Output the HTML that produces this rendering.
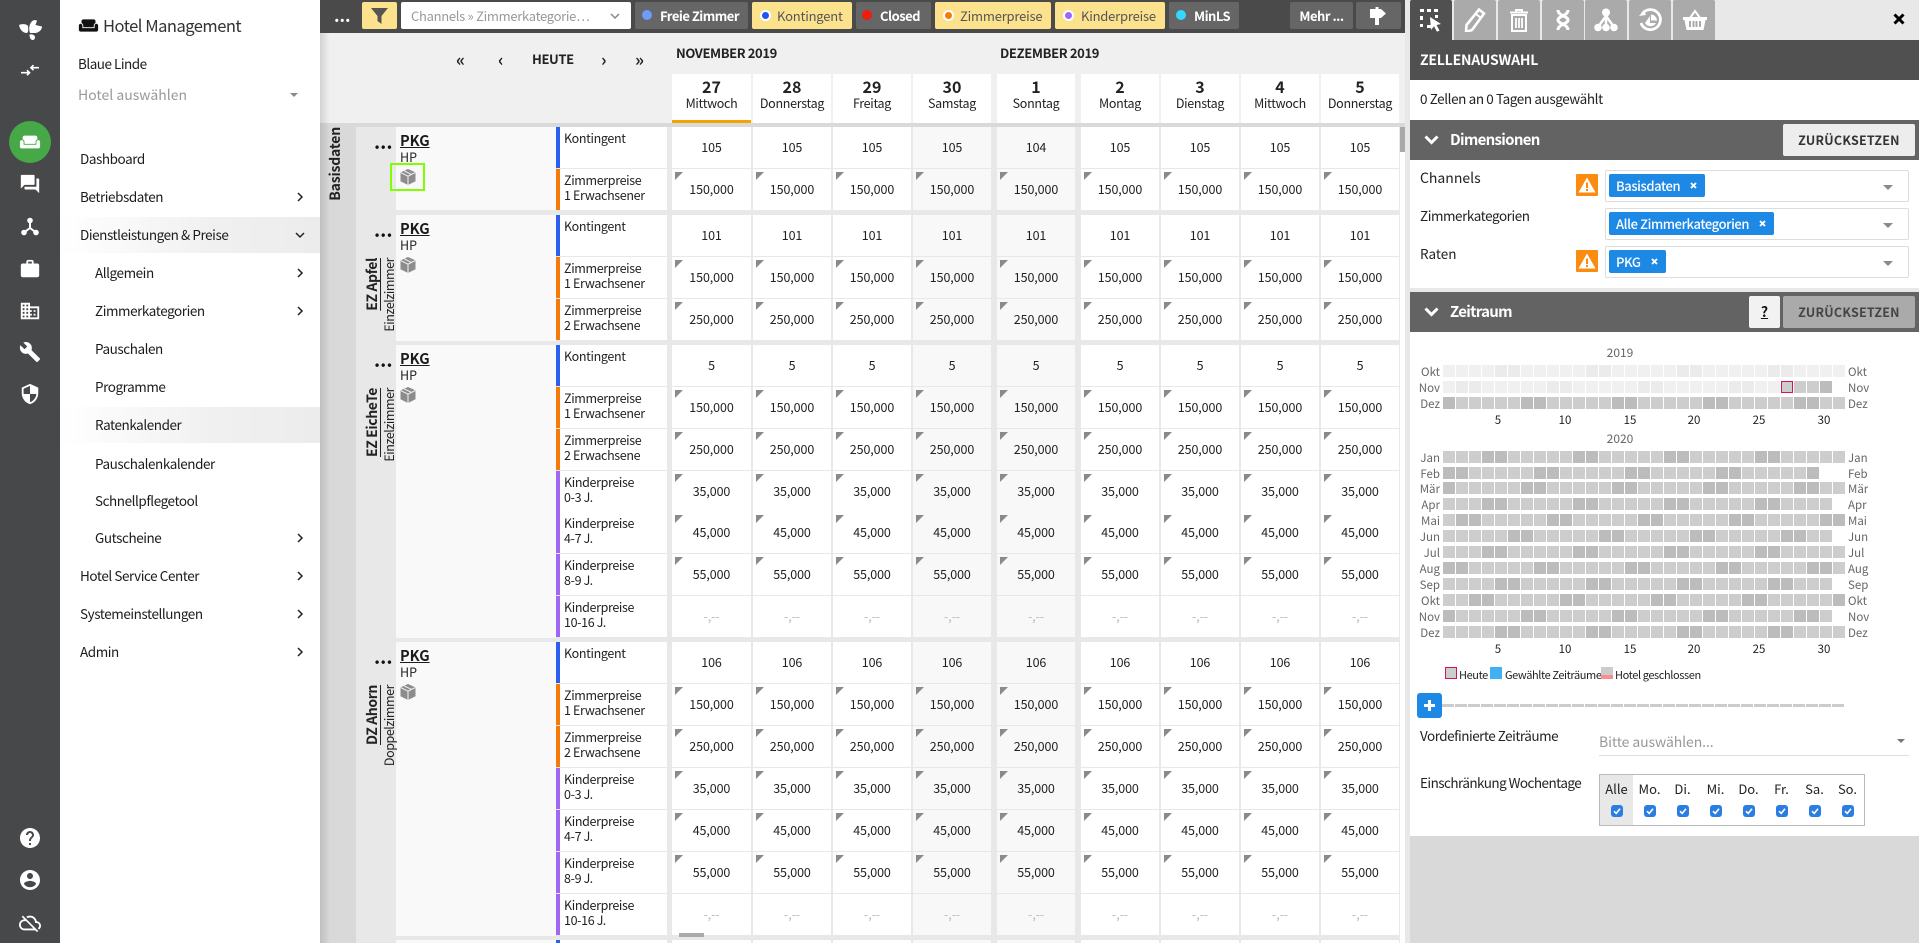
<!DOCTYPE html>
<html lang="de"><head><meta charset="utf-8"><title>Ratenkalender</title>
<style>
*{box-sizing:border-box;margin:0;padding:0}
html,body{width:1919px;height:943px;overflow:hidden;background:#fff}
body{position:relative;font-family:"Noto Sans CJK JP","Liberation Sans",sans-serif;font-size:13px;color:#222;line-height:16px}
.a{position:absolute}
.a,.m,.t1,.tb,.lb,.k,.c,.ml,.mr,.n,.wd,.wc{white-space:nowrap}
#rail{position:absolute;left:0;top:0;width:60px;height:943px;background:#47484a}
#rail svg{position:absolute;fill:#fff}
#side{position:absolute;left:60px;top:0;width:260px;height:943px;background:#fff}
.m{position:absolute;left:0;width:260px;height:36px;line-height:34px;font-size:13.5px;letter-spacing:-.44px;padding-left:20px;color:#1c1c1c}
.m.s{padding-left:35px}
.m.h{background:linear-gradient(90deg,#fff,#f0f0f0 60%,#ececec)}
.m svg{position:absolute;left:235px;top:13px}
#main{position:absolute;left:320px;top:33px;width:1085px;height:910px;background:#f0f0f0}
#shade{position:absolute;left:320px;top:33px;width:10px;height:910px;background:linear-gradient(90deg,rgba(0,0,0,.12),rgba(0,0,0,0))}
#top{position:absolute;left:320px;top:0;width:1085px;height:33px;background:#4a4a4a}
.tb{position:absolute;top:2px;height:27px;border-radius:2px;background:#666;color:#fff;font-weight:700;line-height:27px;font-size:13px;letter-spacing:-.5px}
.tb.y{background:#fde28e;color:#555;font-weight:400;letter-spacing:-.2px}
.tb b{position:absolute;top:8px;width:10px;height:10px;border-radius:50%}
.tb.y b{box-shadow:0 0 0 2px #fff;width:7px;height:7px;top:10px;left:9.500px}
.tb span{position:absolute;top:0}
.hd{position:absolute;top:74px;height:49px;background:#fff;text-align:center}
.hd b{display:block;font-size:16px;line-height:18px;margin-top:3px}
.hd span{display:block;font-size:12.500px;letter-spacing:-.3px;line-height:17px;margin-top:-1px}
.lft{position:absolute;background:#f9f9f9;left:396px;width:160px}
.r{position:absolute;left:556px;width:844px;height:41px}
.r u{position:absolute;left:0;top:0;width:4px;height:100%;text-decoration:none}
.k u{background:#2b5ff0}
.z u{background:#f57a0a}
.p u{background:#a067f5}
.r p{position:absolute;left:4px;top:0;width:107px;height:100%;background:#fff;padding:3px 0 0 4px;font-size:12.500px;letter-spacing:-.35px;line-height:15px}
.r i{position:absolute;top:0;height:100%;width:78px;background:#fff;text-align:center;line-height:39px;font-style:normal;font-size:12.500px;letter-spacing:-.1px}
.r i:nth-of-type(1){left:116px;width:79px}
.r i:nth-of-type(2){left:197px}
.r i:nth-of-type(3){left:277px}
.r i:nth-of-type(4){left:357px;background:#f8f8f8}
.r i:nth-of-type(5){left:441px;background:#f8f8f8}
.r i:nth-of-type(6){left:525px}
.r i:nth-of-type(7){left:605px}
.r i:nth-of-type(8){left:685px}
.r i:nth-of-type(9){left:765px}
.t i::before{content:"";position:absolute;left:3px;top:3px;width:0;height:0;border-top:8px solid #8a8a8a;border-right:8px solid transparent}
.e i{color:#bbb}
.pk{position:absolute;left:400px;font-size:14.500px;line-height:18px;font-weight:700;text-decoration:underline;color:#1c1c1c}
.hp{position:absolute;left:400px;font-size:12.500px;line-height:16px}
.dots{position:absolute;left:374px;font-size:19px;font-weight:700;line-height:10px;letter-spacing:0;color:#111}
.box{position:absolute;left:400px;width:16px;height:16px}
.vt{position:absolute;writing-mode:vertical-rl;transform:rotate(180deg);white-space:nowrap}
.vn{left:364px;width:16px;line-height:16px;font-size:14px;letter-spacing:-.4px;font-weight:700;text-decoration:underline;color:#222}
.vs{left:381px;width:16px;line-height:16px;font-size:12.500px;letter-spacing:-.45px;color:#222}
#pan{position:absolute;left:1410px;top:0;width:509px;height:943px;background:#d9d9d9}
#strip{position:absolute;left:1405px;top:0;width:5px;height:943px;background:#e8e8e8}
.tab{position:absolute;top:0;width:42px;height:40px;background:#aaa;border-radius:2px 2px 0 0}
.tab svg{position:absolute;left:9px;top:8px}
.sec{position:absolute;left:1410px;width:509px;height:40px;background:#636363;color:#fff;font-weight:700;font-size:15px;letter-spacing:-.7px;line-height:40px}
.btn{position:absolute;top:124px;left:1783px;width:132px;height:32px;background:#ededed;border-radius:2px;color:#333;font-weight:700;font-size:12.500px;letter-spacing:.25px;line-height:32px;text-align:center}
.sel{position:absolute;left:1605px;width:304px;height:32px;background:#fff;border:1px solid #ddd;border-radius:2px}
.tag{position:absolute;left:3px;top:3px;height:23px;background:#1e88e5;border-radius:2px;color:#fff;font-size:13px;letter-spacing:-.4px;font-weight:500;line-height:23px;padding-left:7px}
.tag svg{position:absolute;top:8px}
.car{position:absolute;width:0;height:0;border-left:5px solid transparent;border-right:5px solid transparent;border-top:5px solid #8a8a8a}
.lb{position:absolute;left:1420px;font-size:13.500px;line-height:18px}
.c{position:absolute;left:1443px;height:12px;--d:#bcbcbc;--l:#cdcdcd;background-image:linear-gradient(90deg,var(--d) 0 12px,#fff 12px 13px,var(--d) 13px 25px,#fff 25px 26px,var(--l) 26px 38px,#fff 38px 39px,var(--l) 39px 51px,#fff 51px 52px,var(--l) 52px 64px,#fff 64px 65px,var(--l) 65px 77px,#fff 77px 78px,var(--l) 78px 90px,#fff 90px 91px);background-size:91px 12px}
.c.lt{--d:#ebebeb;--l:#f0f0f0}
.ml,.mr{position:absolute;font-size:11.500px;line-height:14px;color:#666;margin-top:1px}
.ml{left:1400px;width:40px;text-align:right}
.mr{left:1848px}
.n{position:absolute;font-size:11.500px;line-height:14px;width:30px;text-align:center;color:#222}
.yr{position:absolute;left:1590px;width:60px;text-align:center;color:#666;font-size:12px;line-height:14px}
.cl{position:absolute;width:12px;height:12px}
.lg{position:absolute;top:668px;font-size:11px;letter-spacing:-.4px;line-height:14px}
.wd{position:absolute;top:781px;width:33px;text-align:center;font-size:13px;line-height:16px}
.wc{position:absolute;top:805px;width:12px;height:12px;border-radius:3px;background:#2a7de1}
.wc svg{position:absolute;left:0;top:0}
.dash{position:absolute;left:1442px;top:704px;width:402px;height:3px;background:repeating-linear-gradient(90deg,#ccc 0 12px,#fff 12px 13px)}
</style></head><body>
<svg width="0" height="0" style="position:absolute"><defs>
<symbol id="chr" viewBox="0 0 10 10"><path d="M3 1l4 4-4 4" fill="none" stroke="#222" stroke-width="1.5"/></symbol>
<symbol id="bx" viewBox="0 0 16 16"><path d="M8 0L15.500 3.400V12.200L8 16L.5 12.200V3.400z" fill="#8c8c8c"/><path d="M.8 3.600L8 7.200L15.200 3.600M8 7.200V16M4.200 1.900L11.600 5.400" fill="none" stroke="#f4f4f4" stroke-width="1"/></symbol>
<symbol id="warn" viewBox="0 0 22 22"><rect width="22" height="22" rx="1" fill="#fb8c0f"/><path d="M11 3.500L19.500 18.500H2.500z" fill="#fff"/><rect x="10" y="8.500" width="2" height="5.500" fill="#fb8c0f"/><rect x="10" y="15" width="2" height="2" fill="#fb8c0f"/></symbol>
<symbol id="ck" viewBox="0 0 12 12"><path d="M3 6.200L5.200 8.400L9 3.800" fill="none" stroke="#fff" stroke-width="1.6"/></symbol>
<symbol id="xx" viewBox="0 0 7 7"><path d="M1 1l5 5M6 1L1 6" stroke="#fff" stroke-width="1.900"/></symbol>
</defs></svg>

<div id="rail">
<svg style="left:19px;top:20px" width="24" height="21" viewBox="0 0 24 21"><path d="M0 5C3 3.500 8 4 9 6C9.500 9 9.500 12 8 13C4 13 1 10 0 5ZM11 13C9.500 9 10 3 14 .5C15.500 0 17 0 18 .5L16.500 5L23 6.500C23 9 21 12 17 13ZM10.500 14.500C13 14 16 15 16 17C16 19 15 20 13.500 20C12 20 10.500 18 10.500 14.500Z"/></svg>
<svg style="left:20px;top:63px" width="20" height="14" viewBox="0 0 20 14"><path d="M19 4.700H11M13.500 2.200L11 4.700L13.500 7.200M1 9.700H9.500M7 7.200L9.500 9.700L7 12.200" fill="none" stroke="#fff" stroke-width="1.700"/></svg>
<div class="a" style="left:9px;top:121px;width:42px;height:42px;border-radius:50%;background:#46a846"></div>
<svg style="left:19px;top:131px" width="22" height="22" viewBox="0 0 24 24"><path d="M21 10c-1.100 0-2 .9-2 2v3H5v-3c0-1.100-.9-2-2-2s-2 .9-2 2v5c0 1.100.9 2 2 2h18c1.100 0 2-.9 2-2v-5c0-1.100-.9-2-2-2zm-3-5H6c-1.100 0-2 .9-2 2v2.150c1.160.41 2 1.510 2 2.820V14h12v-2.030c0-1.300.84-2.400 2-2.820V7c0-1.100-.9-2-2-2z"/></svg>
<svg style="left:19px;top:173px" width="22" height="22" viewBox="0 0 24 24"><path d="M21 6h-2v9H6v2c0 .55.45 1 1 1h11l4 4V7c0-.55-.45-1-1-1zm-4 6V3c0-.55-.45-1-1-1H3c-.55 0-1 .45-1 1v14l4-4h10c.55 0 1-.45 1-1z"/></svg>
<svg style="left:21px;top:217px" width="18" height="19" viewBox="0 0 18 19"><circle cx="9" cy="3.500" r="2.800"/><circle cx="3" cy="15.500" r="2.800"/><circle cx="15" cy="15.500" r="2.800"/><path d="M9 6v5L3 15.500M9 11l6 4.500" fill="none" stroke="#fff" stroke-width="2"/></svg>
<svg style="left:19px;top:258px" width="22" height="22" viewBox="0 0 24 24"><path d="M20 6h-4V4c0-1.110-.89-2-2-2h-4c-1.110 0-2 .89-2 2v2H4c-1.110 0-1.990.89-1.990 2L2 19c0 1.110.89 2 2 2h16c1.110 0 2-.89 2-2V8c0-1.110-.89-2-2-2zm-6 0h-4V4h4v2z"/></svg>
<svg style="left:19px;top:300px" width="22" height="22" viewBox="0 0 24 24"><path d="M12 7V3H2v18h20V7H12zM6 19H4v-2h2v2zm0-4H4v-2h2v2zm0-4H4V9h2v2zm0-4H4V5h2v2zm4 12H8v-2h2v2zm0-4H8v-2h2v2zm0-4H8V9h2v2zm0-4H8V5h2v2zm10 12h-8v-2h2v-2h-2v-2h2v-2h-2V9h8v10zm-2-8h-2v2h2v-2zm0 4h-2v2h2v-2z"/></svg>
<svg style="left:19px;top:341px" width="22" height="22" viewBox="0 0 24 24"><path d="M22.700 19l-9.100-9.100c.9-2.300.4-5-1.500-6.900-2-2-5-2.400-7.400-1.300L9 6 6 9 1.600 4.700C.4 7.100.9 10.100 2.900 12.100c1.900 1.900 4.600 2.400 6.900 1.500l9.100 9.100c.4.4 1 .4 1.400 0l2.300-2.300c.5-.4.5-1.100.1-1.400z"/></svg>
<svg style="left:19px;top:383px" width="22" height="22" viewBox="0 0 24 24"><path d="M12 1L3 5v6c0 5.550 3.840 10.740 9 12 5.160-1.260 9-6.450 9-12V5l-9-4zm0 10.990h7c-.53 4.120-3.280 7.790-7 8.940V12H5V6.300l7-3.110v8.800z"/></svg>
<svg style="left:18px;top:826px" width="24" height="24" viewBox="0 0 24 24"><path d="M12 2C6.480 2 2 6.480 2 12s4.480 10 10 10 10-4.480 10-10S17.520 2 12 2zm1 17h-2v-2h2v2zm2.070-7.750l-.9.92C13.450 12.900 13 13.500 13 15h-2v-.5c0-1.100.45-2.100 1.170-2.830l1.240-1.260c.37-.36.59-.86.59-1.410 0-1.100-.9-2-2-2s-2 .9-2 2H8c0-2.210 1.790-4 4-4s4 1.790 4 4c0 .88-.36 1.680-.93 2.250z"/></svg>
<svg style="left:18px;top:868px" width="24" height="24" viewBox="0 0 24 24"><path d="M12 2C6.480 2 2 6.480 2 12s4.480 10 10 10 10-4.480 10-10S17.520 2 12 2zm0 3c1.660 0 3 1.340 3 3s-1.340 3-3 3-3-1.340-3-3 1.340-3 3-3zm0 14.200c-2.500 0-4.710-1.280-6-3.220.03-1.990 4-3.080 6-3.080 1.990 0 5.970 1.090 6 3.080-1.290 1.940-3.500 3.220-6 3.220z"/></svg>
<svg style="left:19px;top:912px" width="22" height="22" viewBox="0 0 24 24"><path d="M19.350 10.040C18.670 6.590 15.640 4 12 4c-1.480 0-2.850.43-4.010 1.170l1.460 1.460C10.210 6.230 11.080 6 12 6c3.040 0 5.500 2.460 5.500 5.500v.5H19c1.660 0 3 1.340 3 3 0 1.130-.64 2.110-1.560 2.620l1.450 1.450C23.160 18.160 24 16.680 24 15c0-2.640-2.050-4.780-4.650-4.960zM3 5.270l2.750 2.740C2.560 8.150 0 10.770 0 14c0 3.310 2.690 6 6 6h11.730l2 2L21 20.730 4.270 4 3 5.270zM7.730 10l8 8H6c-2.210 0-4-1.790-4-4s1.790-4 4-4h1.730z"/></svg>
</div>

<div id="side">
<svg class="a" style="left:18px;top:15px" width="21" height="21" viewBox="0 0 24 24"><path fill="#111" d="M21 10c-1.100 0-2 .9-2 2v3H5v-3c0-1.100-.9-2-2-2s-2 .9-2 2v5c0 1.100.9 2 2 2h18c1.100 0 2-.9 2-2v-5c0-1.100-.9-2-2-2zm-3-5H6c-1.100 0-2 .9-2 2v2.150c1.160.41 2 1.510 2 2.820V14h12v-2.030c0-1.300.84-2.400 2-2.820V7c0-1.100-.9-2-2-2z"/></svg>
<div class="a" style="left:43px;top:14px;font-size:16.500px;letter-spacing:-.5px;line-height:22px;color:#333">Hotel Management</div>
<div class="a" style="left:18px;top:54px;font-size:13.500px;letter-spacing:-.5px;line-height:18px;color:#1c1c1c">Blaue Linde</div>
<div class="a" style="left:18px;top:86px;font-size:14px;line-height:18px;color:#999">Hotel auswählen</div>
<div class="car" style="left:230px;top:93px;border-left-width:4px;border-right-width:4px;border-top-width:4px"></div>
<div class="m" style="top:141px">Dashboard</div>
<div class="m" style="top:179px">Betriebsdaten<svg width="10" height="10"><use href="#chr"/></svg></div>
<div class="m h" style="top:217px">Dienstleistungen &amp; Preise<svg width="10" height="10" style="transform:rotate(90deg)"><use href="#chr"/></svg></div>
<div class="m s" style="top:255px">Allgemein<svg width="10" height="10"><use href="#chr"/></svg></div>
<div class="m s" style="top:293px">Zimmerkategorien<svg width="10" height="10"><use href="#chr"/></svg></div>
<div class="m s" style="top:331px">Pauschalen</div>
<div class="m s" style="top:369px">Programme</div>
<div class="m s h" style="top:407px">Ratenkalender</div>
<div class="m s" style="top:446px">Pauschalenkalender</div>
<div class="m s" style="top:483px">Schnellpflegetool</div>
<div class="m s" style="top:520px">Gutscheine<svg width="10" height="10"><use href="#chr"/></svg></div>
<div class="m" style="top:558px">Hotel Service Center<svg width="10" height="10"><use href="#chr"/></svg></div>
<div class="m" style="top:596px">Systemeinstellungen<svg width="10" height="10"><use href="#chr"/></svg></div>
<div class="m" style="top:634px">Admin<svg width="10" height="10"><use href="#chr"/></svg></div>
</div>

<div id="main"></div>
<div id="top">
<div class="a" style="left:14px;top:8px;color:#fff;font-weight:700;font-size:17px;line-height:14px">...</div>
<div class="tb y" style="left:42px;width:35px"><svg class="a" style="left:9px;top:6px" width="17" height="16" viewBox="0 0 17 16"><path d="M0 0H17L10.500 8V16L6.500 13V8z" fill="#555"/></svg></div>
<div class="tb" style="left:81px;width:230px;background:#fff;color:#999;font-weight:400;letter-spacing:-.3px"><span style="left:10px">Channels » Zimmerkategorie…</span><svg class="a" style="left:209px;top:9px" width="10" height="10"><path d="M1 3l4 4 4-4" fill="none" stroke="#888" stroke-width="1.500"/></svg></div>
<div class="tb" style="left:315px;width:113px"><b style="left:7px;background:#6e9bff"></b><span style="left:25px">Freie Zimmer</span></div>
<div class="tb y" style="left:432px;width:100px"><b style="background:#1f55f0"></b><span style="left:25px">Kontingent</span></div>
<div class="tb" style="left:536px;width:75px"><b style="left:6px;background:#f01c0c"></b><span style="left:24px">Closed</span></div>
<div class="tb y" style="left:615px;width:116px"><b style="background:#f57a0a"></b><span style="left:25px">Zimmerpreise</span></div>
<div class="tb y" style="left:735px;width:110px"><b style="background:#a067f5"></b><span style="left:26px">Kinderpreise</span></div>
<div class="tb" style="left:849px;width:70px"><b style="left:7px;background:#33d7ff"></b><span style="left:25px">MinLS</span></div>
<div class="tb" style="left:970px;width:63px;text-align:center">Mehr ...</div>
<div class="tb" style="left:1036px;width:45px"><svg class="a" style="left:13px;top:5px" width="18" height="19" viewBox="0 0 18 19"><path d="M1 2H12L17 6.500L12 11H1zM6 11h4v7H6zM6.500 0h3v2h-3z" fill="#fff"/></svg></div>
</div>

<div class="a" style="left:456px;top:50px;font-weight:700;font-size:17px;line-height:18px">«</div>
<div class="a" style="left:498px;top:50px;font-weight:700;font-size:17px;line-height:18px">‹</div>
<div class="a" style="left:532px;top:50px;font-weight:700;font-size:13px;letter-spacing:-.4px;line-height:18px">HEUTE</div>
<div class="a" style="left:601px;top:50px;font-weight:700;font-size:17px;line-height:18px">›</div>
<div class="a" style="left:635px;top:50px;font-weight:700;font-size:17px;line-height:18px">»</div>
<div class="a" style="left:676px;top:44px;font-weight:700;font-size:13px;letter-spacing:-.4px;line-height:18px">NOVEMBER 2019</div>
<div class="a" style="left:1000px;top:44px;font-weight:700;font-size:13px;letter-spacing:-.35px;line-height:18px">DEZEMBER 2019</div>

<div class="hd" style="left:672px;width:79px;border-bottom:3px solid #f5a300"><b>27</b><span>Mittwoch</span></div>
<div class="hd" style="left:753px;width:78px"><b>28</b><span>Donnerstag</span></div>
<div class="hd" style="left:833px;width:78px"><b>29</b><span>Freitag</span></div>
<div class="hd" style="left:913px;width:78px"><b>30</b><span>Samstag</span></div>
<div class="hd" style="left:997px;width:78px"><b>1</b><span>Sonntag</span></div>
<div class="hd" style="left:1081px;width:78px"><b>2</b><span>Montag</span></div>
<div class="hd" style="left:1161px;width:78px"><b>3</b><span>Dienstag</span></div>
<div class="hd" style="left:1241px;width:78px"><b>4</b><span>Mittwoch</span></div>
<div class="hd" style="left:1321px;width:78px"><b>5</b><span>Donnerstag</span></div>

<div class="a" style="left:320px;top:123px;width:1085px;height:820px;background:#e8e8e8"></div>
<div class="a" style="left:320px;top:123px;width:1085px;height:4px;background:#d9d9d9"></div>
<div class="a" style="left:320px;top:123px;width:36px;height:820px;background:#d9d9d9"></div>
<div class="a" style="left:1400px;top:127px;width:5px;height:816px;background:#fff"></div>
<div class="a" style="left:1400px;top:127px;width:5px;height:25px;background:#aaa"></div>
<div id="shade"></div>
<div class="vt" style="left:327px;top:127px;width:16px;line-height:16px;font-size:14px;letter-spacing:-.2px;font-weight:700;color:#222">Basisdaten</div>

<div class="lft" style="top:127px;height:83px"></div>
<div class="lft" style="top:215px;height:126px"></div>
<div class="lft" style="top:345px;height:293px"></div>
<div class="lft" style="top:642px;height:294px"></div>
<div class="lft" style="top:940px;height:3px"></div>

<div class="dots" style="top:137px">...</div>
<div class="pk" style="top:132px">PKG</div><div class="hp" style="top:149px">HP</div>
<div class="a" style="left:390px;top:163px;width:35px;height:28px;border:2px solid #80ff00"></div>
<svg class="box" style="top:169px"><use href="#bx"/></svg>

<div class="dots" style="top:225px">...</div>
<div class="pk" style="top:220px">PKG</div><div class="hp" style="top:237px">HP</div>
<svg class="box" style="top:257px"><use href="#bx"/></svg>
<div class="vt vn" style="top:258px">EZ Apfel</div><div class="vt vs" style="top:258px">Einzelzimmer</div>

<div class="dots" style="top:355px">...</div>
<div class="pk" style="top:350px">PKG</div><div class="hp" style="top:367px">HP</div>
<svg class="box" style="top:387px"><use href="#bx"/></svg>
<div class="vt vn" style="top:388px">EZ EicheTe</div><div class="vt vs" style="top:388px">Einzelzimmer</div>

<div class="dots" style="top:652px">...</div>
<div class="pk" style="top:647px">PKG</div><div class="hp" style="top:664px">HP</div>
<svg class="box" style="top:684px"><use href="#bx"/></svg>
<div class="vt vn" style="top:685px">DZ Ahorn</div><div class="vt vs" style="top:685px">Doppelzimmer</div>

<div class="r k" style="top:127px"><u></u><p>Kontingent</p><i>105</i><i>105</i><i>105</i><i>105</i><i>104</i><i>105</i><i>105</i><i>105</i><i>105</i></div>
<div class="r z t" style="top:169px"><u></u><p>Zimmerpreise<br>1 Erwachsener</p><i>150,000</i><i>150,000</i><i>150,000</i><i>150,000</i><i>150,000</i><i>150,000</i><i>150,000</i><i>150,000</i><i>150,000</i></div>

<div class="r k" style="top:215px"><u></u><p>Kontingent</p><i>101</i><i>101</i><i>101</i><i>101</i><i>101</i><i>101</i><i>101</i><i>101</i><i>101</i></div>
<div class="r z t" style="top:257px"><u></u><p>Zimmerpreise<br>1 Erwachsener</p><i>150,000</i><i>150,000</i><i>150,000</i><i>150,000</i><i>150,000</i><i>150,000</i><i>150,000</i><i>150,000</i><i>150,000</i></div>
<div class="r z t" style="top:299px"><u></u><p>Zimmerpreise<br>2 Erwachsene</p><i>250,000</i><i>250,000</i><i>250,000</i><i>250,000</i><i>250,000</i><i>250,000</i><i>250,000</i><i>250,000</i><i>250,000</i></div>

<div class="r k" style="top:345px"><u></u><p>Kontingent</p><i>5</i><i>5</i><i>5</i><i>5</i><i>5</i><i>5</i><i>5</i><i>5</i><i>5</i></div>
<div class="r z t" style="top:387px"><u></u><p>Zimmerpreise<br>1 Erwachsener</p><i>150,000</i><i>150,000</i><i>150,000</i><i>150,000</i><i>150,000</i><i>150,000</i><i>150,000</i><i>150,000</i><i>150,000</i></div>
<div class="r z t" style="top:429px"><u></u><p>Zimmerpreise<br>2 Erwachsene</p><i>250,000</i><i>250,000</i><i>250,000</i><i>250,000</i><i>250,000</i><i>250,000</i><i>250,000</i><i>250,000</i><i>250,000</i></div>
<div class="r p t" style="top:471px"><u></u><p>Kinderpreise<br>0-3 J.</p><i>35,000</i><i>35,000</i><i>35,000</i><i>35,000</i><i>35,000</i><i>35,000</i><i>35,000</i><i>35,000</i><i>35,000</i></div>
<div class="r p t" style="top:512px"><u></u><p>Kinderpreise<br>4-7 J.</p><i>45,000</i><i>45,000</i><i>45,000</i><i>45,000</i><i>45,000</i><i>45,000</i><i>45,000</i><i>45,000</i><i>45,000</i></div>
<div class="r p t" style="top:554px"><u></u><p>Kinderpreise<br>8-9 J.</p><i>55,000</i><i>55,000</i><i>55,000</i><i>55,000</i><i>55,000</i><i>55,000</i><i>55,000</i><i>55,000</i><i>55,000</i></div>
<div class="r p e" style="top:596px"><u></u><p>Kinderpreise<br>10-16 J.</p><i>-,--</i><i>-,--</i><i>-,--</i><i>-,--</i><i>-,--</i><i>-,--</i><i>-,--</i><i>-,--</i><i>-,--</i></div>

<div class="r k" style="top:642px"><u></u><p>Kontingent</p><i>106</i><i>106</i><i>106</i><i>106</i><i>106</i><i>106</i><i>106</i><i>106</i><i>106</i></div>
<div class="r z t" style="top:684px"><u></u><p>Zimmerpreise<br>1 Erwachsener</p><i>150,000</i><i>150,000</i><i>150,000</i><i>150,000</i><i>150,000</i><i>150,000</i><i>150,000</i><i>150,000</i><i>150,000</i></div>
<div class="r z t" style="top:726px"><u></u><p>Zimmerpreise<br>2 Erwachsene</p><i>250,000</i><i>250,000</i><i>250,000</i><i>250,000</i><i>250,000</i><i>250,000</i><i>250,000</i><i>250,000</i><i>250,000</i></div>
<div class="r p t" style="top:768px"><u></u><p>Kinderpreise<br>0-3 J.</p><i>35,000</i><i>35,000</i><i>35,000</i><i>35,000</i><i>35,000</i><i>35,000</i><i>35,000</i><i>35,000</i><i>35,000</i></div>
<div class="r p t" style="top:810px"><u></u><p>Kinderpreise<br>4-7 J.</p><i>45,000</i><i>45,000</i><i>45,000</i><i>45,000</i><i>45,000</i><i>45,000</i><i>45,000</i><i>45,000</i><i>45,000</i></div>
<div class="r p t" style="top:852px"><u></u><p>Kinderpreise<br>8-9 J.</p><i>55,000</i><i>55,000</i><i>55,000</i><i>55,000</i><i>55,000</i><i>55,000</i><i>55,000</i><i>55,000</i><i>55,000</i></div>
<div class="r p e" style="top:894px"><u></u><p>Kinderpreise<br>10-16 J.</p><i>-,--</i><i>-,--</i><i>-,--</i><i>-,--</i><i>-,--</i><i>-,--</i><i>-,--</i><i>-,--</i><i>-,--</i></div>
<div class="r k" style="top:940px;height:3px"><u></u><p></p><i></i><i></i><i></i><i></i><i></i><i></i><i></i><i></i><i></i></div>
<div class="a" style="left:679px;top:933px;width:25px;height:4px;background:#aaa"></div>

<div id="strip"></div>
<div id="pan"></div>
<div class="a" style="left:1410px;top:0;width:509px;height:40px;background:#e8e8e8"></div>
<div class="tab" style="left:1410px;background:#505050"><svg width="24" height="24" viewBox="0 0 24 24"><path d="M1 1h4v3H1zM8 1h4v3H8zM15 1h4v3h-4zM1 8h3v4H1zM16 7h3v3h-3zM1 16h3v3H1zM8 17h4v3H8z" fill="#fff"/><path d="M11 9l11 7-4.500 1 3 5.500-2.500 1.300-3-5.500L12 22z" fill="#fff"/></svg></div>
<div class="tab" style="left:1454px"><svg width="24" height="24" viewBox="0 0 24 24"><path d="M16 1.500l5 4L9 22l-6 2 .5-7z" fill="none" stroke="#fff" stroke-width="2.600"/><path d="M13 6l5 4" stroke="#fff" stroke-width="2"/></svg></div>
<div class="tab" style="left:1498px"><svg width="24" height="24" viewBox="0 0 24 24"><path d="M3 4.500h18M9 4V2h6v2" fill="none" stroke="#fff" stroke-width="2"/><path d="M5 7h14v16H5z" fill="none" stroke="#fff" stroke-width="2"/><path d="M9 10v10M12 10v10M15 10v10" stroke="#fff" stroke-width="1.800"/></svg></div>
<div class="tab" style="left:1542px"><svg width="24" height="24" viewBox="0 0 24 24"><path d="M7 2C7 8 17 8 17 12C17 16 7 16 7 22M17 2C17 8 7 8 7 12C7 16 17 16 17 22" fill="none" stroke="#fff" stroke-width="3"/></svg></div>
<div class="tab" style="left:1585px"><svg width="24" height="24" viewBox="0 0 24 24"><path d="M12 5v14M12 8L4 19M12 8l8 11" fill="none" stroke="#fff" stroke-width="2.500"/><g fill="#fff"><circle cx="12" cy="4.500" r="4"/><circle cx="4" cy="19.500" r="3.800"/><circle cx="20" cy="19.500" r="3.800"/><circle cx="12" cy="19.500" r="3.800"/></g></svg></div>
<div class="tab" style="left:1629px"><svg width="24" height="24" viewBox="0 0 24 24"><path d="M4.500 5.500A10 10 0 1 1 3 15" fill="none" stroke="#fff" stroke-width="2.800"/><path d="M1 8l7-1-2-5zM13 6.500v6h6a6.200 6.200 0 0 0-6-6zM7 15a6.300 6.300 0 0 0 11 0h-6V8" fill="#fff"/></svg></div>
<div class="tab" style="left:1673px"><svg width="26" height="24" viewBox="0 0 26 24"><path d="M8 10l5-7 5 7" fill="none" stroke="#fff" stroke-width="2"/><path d="M1 9h24v3h-1.500l-2 10h-17l-2-10H1z" fill="#fff"/><path d="M8 13v6M11.500 13v6M14.500 13v6M18 13v6" stroke="#aaa" stroke-width="2"/></svg></div>
<svg class="a" style="left:1893px;top:13px" width="12" height="12" viewBox="0 0 12 12"><path d="M1.500 1.500l9 9M10.500 1.500l-9 9" stroke="#000" stroke-width="3"/></svg>

<div class="a" style="left:1410px;top:40px;width:509px;height:40px;background:#505050;color:#fff;font-weight:700;font-size:14px;letter-spacing:-.2px;line-height:40px;padding-left:10px">ZELLENAUSWAHL</div>
<div class="a" style="left:1410px;top:80px;width:509px;height:40px;background:#fff;font-size:13.500px;letter-spacing:-.4px;line-height:18px;padding:9px 0 0 10px;color:#222">0 Zellen an 0 Tagen ausgewählt</div>
<div class="sec" style="top:120px"><svg class="a" style="left:14px;top:13px" width="15" height="14" viewBox="0 0 15 14"><path d="M1.500 3.500l6 6 6-6" fill="none" stroke="#fff" stroke-width="3"/></svg><span class="a" style="left:40px">Dimensionen</span></div>
<div class="btn">ZURÜCKSETZEN</div>

<div class="a" style="left:1410px;top:160px;width:509px;height:128px;background:#fff"></div>
<div class="lb" style="top:169px;font-size:14px">Channels</div>
<svg class="a" style="left:1576px;top:174px" width="22" height="22"><use href="#warn"/></svg>
<div class="sel" style="top:170px"><div class="tag" style="width:96px">Basisdaten<svg style="left:81px" width="7" height="7"><use href="#xx"/></svg></div><div class="car" style="left:277px;top:14px"></div></div>
<div class="lb" style="top:206px;letter-spacing:-.45px">Zimmerkategorien</div>
<div class="sel" style="top:208px"><div class="tag" style="width:165px">Alle Zimmerkategorien<svg style="left:150px" width="7" height="7"><use href="#xx"/></svg></div><div class="car" style="left:277px;top:14px"></div></div>
<div class="lb" style="top:244px">Raten</div>
<svg class="a" style="left:1576px;top:250px" width="22" height="22"><use href="#warn"/></svg>
<div class="sel" style="top:246px"><div class="tag" style="width:57px">PKG<svg style="left:42px" width="7" height="7"><use href="#xx"/></svg></div><div class="car" style="left:277px;top:14px"></div></div>

<div class="a" style="left:1410px;top:288px;width:509px;height:4px;background:#e8e8e8"></div>
<div class="sec" style="top:292px"><svg class="a" style="left:14px;top:13px" width="15" height="14" viewBox="0 0 15 14"><path d="M1.500 3.500l6 6 6-6" fill="none" stroke="#fff" stroke-width="3"/></svg><span class="a" style="left:40px">Zeitraum</span></div>
<div class="btn" style="top:296px;left:1749px;width:31px;text-decoration:underline;letter-spacing:0;color:#111;font-size:14px;background:#f2f2f2">?</div>
<div class="btn" style="top:296px;background:#aaa;color:#444">ZURÜCKSETZEN</div>

<div class="a" style="left:1410px;top:332px;width:509px;height:504px;background:#fff"></div>
<div class="yr" style="top:346px">2019</div>
<div class="ml" style="top:364px">Okt</div><div class="mr" style="top:364px">Okt</div><div class="c lt" style="top:365px;width:402px;background-position-x:52px"></div>
<div class="ml" style="top:380px">Nov</div><div class="mr" style="top:380px">Nov</div><div class="c lt" style="top:381px;width:337px;background-position-x:13px"></div>
<div class="cl" style="left:1781px;top:381px;background:#cdcdcd;border:1px solid #d4145a"></div>
<div class="cl" style="left:1794px;top:381px;background:#cdcdcd"></div><div class="cl" style="left:1807px;top:381px;background:#cdcdcd"></div><div class="cl" style="left:1820px;top:381px;background:#bcbcbc"></div>
<div class="ml" style="top:396px">Dez</div><div class="mr" style="top:396px">Dez</div><div class="c" style="top:397px;width:402px;background-position-x:78px"></div>
<div class="n" style="left:1483px;top:413px">5</div><div class="n" style="left:1550px;top:413px">10</div><div class="n" style="left:1615px;top:413px">15</div><div class="n" style="left:1679px;top:413px">20</div><div class="n" style="left:1744px;top:413px">25</div><div class="n" style="left:1809px;top:413px">30</div>

<div class="yr" style="top:432px">2020</div>
<div class="ml" style="top:450px">Jan</div><div class="mr" style="top:450px">Jan</div><div class="c" style="top:451px;width:402px;background-position-x:39px"></div>
<div class="ml" style="top:466px">Feb</div><div class="mr" style="top:466px">Feb</div><div class="c" style="top:467px;width:376px;background-position-x:0"></div>
<div class="ml" style="top:481px">Mär</div><div class="mr" style="top:481px">Mär</div><div class="c" style="top:482px;width:402px;background-position-x:78px"></div>
<div class="ml" style="top:497px">Apr</div><div class="mr" style="top:497px">Apr</div><div class="c" style="top:498px;width:389px;background-position-x:39px"></div>
<div class="ml" style="top:513px">Mai</div><div class="mr" style="top:513px">Mai</div><div class="c" style="top:514px;width:402px;background-position-x:13px"></div>
<div class="ml" style="top:529px">Jun</div><div class="mr" style="top:529px">Jun</div><div class="c" style="top:530px;width:389px;background-position-x:65px"></div>
<div class="ml" style="top:545px">Jul</div><div class="mr" style="top:545px">Jul</div><div class="c" style="top:546px;width:402px;background-position-x:39px"></div>
<div class="ml" style="top:561px">Aug</div><div class="mr" style="top:561px">Aug</div><div class="c" style="top:562px;width:402px;background-position-x:0"></div>
<div class="ml" style="top:577px">Sep</div><div class="mr" style="top:577px">Sep</div><div class="c" style="top:578px;width:389px;background-position-x:52px"></div>
<div class="ml" style="top:593px">Okt</div><div class="mr" style="top:593px">Okt</div><div class="c" style="top:594px;width:402px;background-position-x:26px"></div>
<div class="ml" style="top:609px">Nov</div><div class="mr" style="top:609px">Nov</div><div class="c" style="top:610px;width:389px;background-position-x:78px"></div>
<div class="ml" style="top:625px">Dez</div><div class="mr" style="top:625px">Dez</div><div class="c" style="top:626px;width:402px;background-position-x:52px"></div>
<div class="n" style="left:1483px;top:642px">5</div><div class="n" style="left:1550px;top:642px">10</div><div class="n" style="left:1615px;top:642px">15</div><div class="n" style="left:1679px;top:642px">20</div><div class="n" style="left:1744px;top:642px">25</div><div class="n" style="left:1809px;top:642px">30</div>

<div class="cl" style="left:1445px;top:667px;background:#cdcdcd;border:1px solid #d4145a"></div>
<div class="lg" style="left:1459px">Heute</div>
<div class="cl" style="left:1490px;top:667px;background:#42b0f5"></div>
<div class="lg" style="left:1505px">Gewählte Zeiträume</div>
<div class="cl" style="left:1601px;top:667px;background:linear-gradient(#ccc 0 8px,#f88e8e 8px)"></div>
<div class="lg" style="left:1615px">Hotel geschlossen</div>

<div class="dash"></div>
<div class="a" style="left:1417px;top:693px;width:25px;height:25px;background:#1e88e5;border-radius:3px"><svg class="a" style="left:6px;top:6px" width="13" height="13" viewBox="0 0 13 13"><path d="M6.500 1v11M1 6.500h11" stroke="#fff" stroke-width="3"/></svg></div>

<div class="lb" style="left:1420px;top:726px;letter-spacing:-.5px">Vordefinierte Zeiträume</div>
<div class="a" style="left:1599px;top:733px;font-size:14px;letter-spacing:-.1px;line-height:18px;color:#999">Bitte auswählen...</div>
<div class="a" style="left:1599px;top:755px;width:310px;height:1px;background:#ddd"></div>
<div class="car" style="left:1897px;top:739px;border-left-width:4px;border-right-width:4px;border-top-width:4px;border-top-color:#777"></div>
<div class="lb" style="top:773px;letter-spacing:-.55px">Einschränkung Wochentage</div>
<div class="a" style="left:1599px;top:774px;width:266px;height:52px;border:1px solid #bbb;background:#fff"></div>
<div class="a" style="left:1600px;top:775px;width:33px;height:50px;background:#e8e8e8"></div>
<div class="wd" style="left:1600px">Alle</div><div class="wd" style="left:1633px">Mo.</div><div class="wd" style="left:1666px">Di.</div><div class="wd" style="left:1699px">Mi.</div><div class="wd" style="left:1732px">Do.</div><div class="wd" style="left:1765px">Fr.</div><div class="wd" style="left:1798px">Sa.</div><div class="wd" style="left:1831px">So.</div>
<div class="wc" style="left:1611px"><svg width="12" height="12"><use href="#ck"/></svg></div>
<div class="wc" style="left:1644px"><svg width="12" height="12"><use href="#ck"/></svg></div>
<div class="wc" style="left:1677px"><svg width="12" height="12"><use href="#ck"/></svg></div>
<div class="wc" style="left:1710px"><svg width="12" height="12"><use href="#ck"/></svg></div>
<div class="wc" style="left:1743px"><svg width="12" height="12"><use href="#ck"/></svg></div>
<div class="wc" style="left:1776px"><svg width="12" height="12"><use href="#ck"/></svg></div>
<div class="wc" style="left:1809px"><svg width="12" height="12"><use href="#ck"/></svg></div>
<div class="wc" style="left:1842px"><svg width="12" height="12"><use href="#ck"/></svg></div>
</body></html>
